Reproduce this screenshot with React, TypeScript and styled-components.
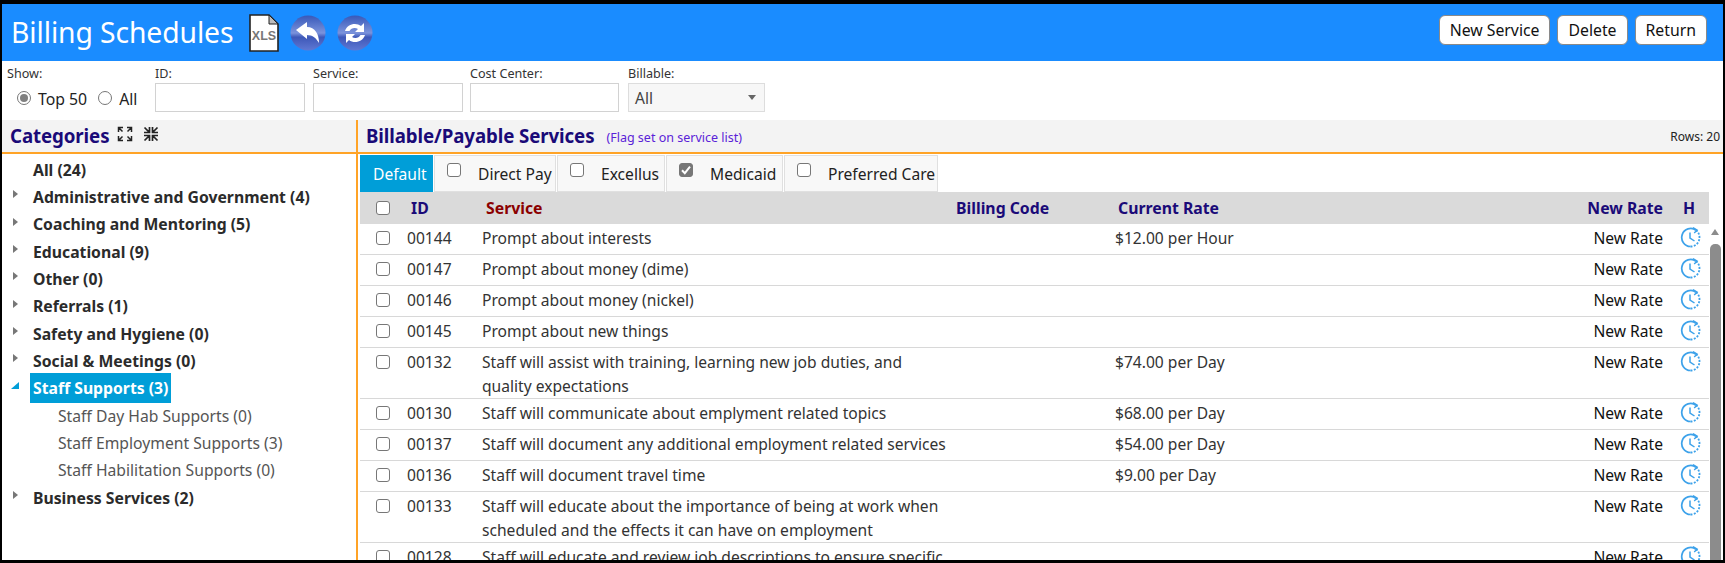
import React from "react";
import styled, { createGlobalStyle } from "styled-components";

const Global = createGlobalStyle`
  html, body { margin: 0; padding: 0; background: #000; overflow: hidden; }
  * { box-sizing: border-box; }
  body { font-family: "Noto Sans", "Open Sans", Arial, sans-serif; }
`;

const Frame = styled.div`
  width: 1725px; height: 563px; background: #fff; overflow: hidden;
  border-style: solid; border-color: #000; border-width: 4px 2px 3px 2px;
  display: flex; flex-direction: column;
`;
const Header = styled.header`
  height: 57px; flex: none; background: #1a8cff; display: flex; align-items: center; padding: 0 16px 0 9px;
`;
const Title = styled.h1`
  margin: 0 16px 0 0; font-size: 28.3px; font-weight: 400; color: #fff; letter-spacing: -0.1px; line-height: 1;
`;
const IconRow = styled.div`display: flex; align-items: center; gap: 11px;`;
const HeadButtons = styled.div`margin-left: auto; display: flex; gap: 7px; margin-top: -6px;`;
const HeadButton = styled.button`
  height: 30px; padding: 0 10px; background: #fff; color: #111; border: 1px solid #8a8a8a; border-radius: 6px;
  font: 400 15.8px "Noto Sans", sans-serif;
`;
const Filters = styled.div`
  height: 59px; flex: none; display: flex; padding: 5px 0 0 5px;
`;
const Field = styled.div<{ $w: number; $gap?: number }>`
  width: ${p => p.$w}px; margin-right: ${p => p.$gap ?? 8}px; display: flex; flex-direction: column;
`;
const FieldLabel = styled.label`
  font-size: 12.6px; line-height: 16px; color: #333; height: 17px; display: block;
`;
const TextBox = styled.input`
  width: 100%; height: 29px; border: 1px solid #d2d2d2; background: #fff; outline: none;
`;
const SelectBox = styled.div`
  height: 29px; border: 1px solid #ddd; background: #f7f7f7; display: flex; align-items: center;
  justify-content: space-between; padding: 0 8px 0 6px; font-size: 15.6px; color: #444;
`;
const Caret = styled.span`
  width: 0; height: 0; border-left: 4.5px solid transparent; border-right: 4.5px solid transparent; border-top: 5px solid #666;
`;
const ShowRow = styled.div`display: flex; align-items: center; height: 29px; padding: 3px 0 0 10px; font-size: 15.8px; color: #222;`;
const Radio = styled.span<{ $on?: boolean }>`
  width: 14px; height: 14px; border-radius: 50%; border: 1px solid #777; background: #fff; display: inline-flex;
  align-items: center; justify-content: center; margin-right: 7px; margin-top: -3px;
  &::after { content: ""; width: 8px; height: 8px; border-radius: 50%; background: ${p => (p.$on ? "#808080" : "transparent")}; }
`;
const RadioText = styled.span`margin-right: 11px;`;
const Panes = styled.div`flex: 1; min-height: 0; display: flex;`;
const LeftPane = styled.aside`width: 354px; flex: none; display: flex; flex-direction: column;`;
const RightPane = styled.section`flex: 1; min-width: 0; display: flex; flex-direction: column; border-left: 2px solid #ffa326;`;
const SectionHead = styled.div`
  height: 34px; flex: none; background: #f3f3f3; border-bottom: 2px solid #ffa326; display: flex; align-items: center;
  padding: 0 3px 0 8px;
`;
const SectionTitle = styled.h2`
  margin: 0; font-size: 18.7px; font-weight: 700; color: #1a0a78; line-height: 1; letter-spacing: -0.1px;
`;
const Note = styled.span`font-size: 12.5px; color: #5a22d8; margin: 3px 0 0 12px;`;
const RowsCount = styled.span`margin-left: auto; font-size: 12px; color: #222;`;
const ExpandIcons = styled.span`display: inline-flex; gap: 10px; margin: -4px 0 0 8px;`;
const Tree = styled.ul`list-style: none; margin: 0; padding: 2px 0 0 0;`;
const TreeItem = styled.li<{ $sub?: boolean }>`
  height: 27.35px; display: flex; align-items: center; position: relative; padding-left: ${p => (p.$sub ? 56 : 28)}px;
`;
const Arrow = styled.span<{ $open?: boolean }>`
  position: absolute; left: ${p => (p.$open ? 9 : 11)}px; top: 7px; width: 0; height: 0;
  ${p => p.$open
    ? "border-bottom: 7px solid #009ed8; border-left: 8px solid transparent;"
    : "border-left: 5px solid #777; border-top: 4.5px solid transparent; border-bottom: 4.5px solid transparent;"}
`;
const CatLabel = styled.span<{ $sel?: boolean }>`
  font-size: 15.75px; font-weight: 700; color: ${p => (p.$sel ? "#fff" : "#2b2b2b")}; background: ${p => (p.$sel ? "#009ed8" : "transparent")};
  line-height: 30px; padding: 0 3px; white-space: nowrap; position: relative;
`;
const SubLabel = styled.span`font-size: 15.7px; color: #555; white-space: nowrap;`;
const Tabs = styled.div`height: 38px; flex: none; display: flex; padding: 1px 0 0 2px;`;
const Tab = styled.div<{ $active?: boolean; $w: number }>`
  width: ${p => p.$w}px; margin-right: 1px; height: 37px; display: flex; align-items: center; font-size: 15.6px; white-space: nowrap;
  padding-left: 12px; color: ${p => (p.$active ? "#fff" : "#222")};
  background: ${p => (p.$active ? "#009ed8" : "#f8f8f8")}; border: 1px solid ${p => (p.$active ? "#009ed8" : "#e0e0e0")};
`;
const Check = styled.span<{ $on?: boolean }>`
  display: block; width: 14px; height: 14px; flex: none; border: 1.5px solid #777; border-radius: 3px; background: ${p => (p.$on ? "#777" : "#fff")};
`;
const TabCheck = styled(Check)`margin: -8px 17px 0 0; display: inline-flex; align-items: center; justify-content: center;`;
const TableArea = styled.div`flex: 1; min-height: 0; display: flex;`;
const Table = styled.div`flex: 1; min-width: 0; overflow: hidden; margin-left: 2px;`;
const cols = "42px 76px 474px 160px 1fr 80px 46px";
const HeadRow = styled.div`
  display: grid; grid-template-columns: ${cols}; height: 32px; background: #dadada; align-items: center;
  font-size: 15.8px; font-weight: 700; color: #1a0a78;
`;
const HeadCell = styled.div<{ $color?: string; $right?: boolean; $pad?: number }>`
  color: ${p => p.$color ?? "#1a0a78"}; text-align: ${p => (p.$right ? "right" : "left")}; padding-left: ${p => p.$pad ?? 0}px; white-space: nowrap;
`;
const Row = styled.div`
  display: grid; grid-template-columns: ${cols}; min-height: 31px; border-bottom: 1px solid #d8d8d8; padding-top: 2px;
  font-size: 15.6px; line-height: 24px; color: #333;
`;
const Cell = styled.div<{ $pad?: number }>`padding-left: ${p => p.$pad ?? 0}px;`;
const HeadCheck = styled.div`padding-left: 16px;`;
const CheckCell = styled.div`padding: 5px 0 0 16px;`;
const RateCell = styled.div`color: #111; white-space: nowrap; text-align: right;`;
const HistoryCell = styled.div`padding-left: 17px; svg { display: block; }`;
const Scrollbar = styled.div`width: 14px; flex: none; display: flex; flex-direction: column; align-items: center; padding: 37px 2px 0 0;`;
const ScrollUp = styled.span`width: 0; height: 0; border-left: 4.5px solid transparent; border-right: 4.5px solid transparent; border-bottom: 6px solid #8c8c8c;`;
const Thumb = styled.div`flex: 1; width: 11px; margin-top: 9px; background: #8c8c8c; border-radius: 5px 5px 0 0;`;

const XlsIcon = () => (
  <svg width="30" height="38" viewBox="0 0 30 38">
    <path d="M1 1h19l9 9v27H1z" fill="#fff" stroke="#222" strokeWidth="1.6" />
    <path d="M20 1v9h9z" fill="#bdbdbd" stroke="#222" strokeWidth="1" />
    <text x="15" y="26" textAnchor="middle" fontFamily="Liberation Sans, sans-serif" fontWeight="700" fontSize="12.5" fill="#777">XLS</text>
  </svg>
);
const Glossy = ({ id, children }: { id: string; children: React.ReactNode }) => (
  <svg width="36" height="36" viewBox="0 0 36 36">
    <defs>
      <linearGradient id={id} x1="0" y1="0" x2="0" y2="1">
        <stop offset="0" stopColor="#3858b8" />
        <stop offset="0.5" stopColor="#7b93dc" />
        <stop offset="0.62" stopColor="#3e58b8" />
        <stop offset="1" stopColor="#5f78d4" />
      </linearGradient>
    </defs>
    <circle cx="18" cy="18" r="17.5" fill={`url(#${id})`} />
    {children}
  </svg>
);
const BackIcon = () => (
  <Glossy id="gb">
    <path d="M6 15 L17 7 V12 C25 12 29 19 29 28 C26 23 23 20 17 20 V24 Z" fill="#fff" />
  </Glossy>
);
const RefreshIcon = () => (
  <Glossy id="gr">
    <path d="M8 16 C10 9 19 7 24 11 L27 8 V17 H18 L21 14 C18 12 14 13 12.5 16 Z M28 20 C26 27 17 29 12 25 L9 28 V19 H18 L15 22 C18 24 22 23 23.5 20 Z" fill="#fff" />
  </Glossy>
);
const ExpandIcon = () => (
  <svg width="16" height="16" viewBox="0 0 16 16" stroke="#222" strokeWidth="1.5" fill="none">
    <path d="M1.5 6V1.5H6M1.5 1.5l4 4M10 1.5h4.5V6M14.5 1.5l-4 4M1.5 10v4.5H6M1.5 14.5l4-4M14.5 10v4.5H10M14.5 14.5l-4-4" />
  </svg>
);
const CollapseIcon = () => (
  <svg width="16" height="16" viewBox="0 0 16 16" stroke="#222" strokeWidth="1.7" fill="none">
    <path d="M6.5 1v5.5H1M1.5 1.5l5 5M9.5 1v5.5H15M14.5 1.5l-5 5M6.5 15V9.5H1M1.5 14.5l5-5M9.5 15V9.5H15M14.5 14.5l-5-5" />
  </svg>
);
const ClockIcon = () => (
  <svg width="21" height="22" viewBox="0 0 21 22" fill="none" stroke="#3da2ea">
    <path d="M16 4.2A9 9 0 1 0 10.5 20.5" strokeWidth="1.7" />
    <path d="M10.5 20.5A9 9 0 0 0 19.5 11.5A9 9 0 0 0 16 4.2" strokeWidth="1.8" strokeDasharray="2 1.4" />
    <path d="M10 6.5V12l4.5 3" strokeWidth="1.5" />
    <path d="M13 1.5l4.2 2.6-3 3" strokeWidth="1.4" />
  </svg>
);
const Tick = () => (
  <svg width="10" height="10" viewBox="0 0 10 10"><path d="M1 5.2l2.8 3L9 1.6" fill="none" stroke="#fff" strokeWidth="2" /></svg>
);

const categories: { t: string; arrow?: boolean; open?: boolean; sel?: boolean; sub?: boolean }[] = [
  { t: "All (24)" },
  { t: "Administrative and Government (4)", arrow: true },
  { t: "Coaching and Mentoring (5)", arrow: true },
  { t: "Educational (9)", arrow: true },
  { t: "Other (0)", arrow: true },
  { t: "Referrals (1)", arrow: true },
  { t: "Safety and Hygiene (0)", arrow: true },
  { t: "Social & Meetings (0)", arrow: true },
  { t: "Staff Supports (3)", arrow: true, open: true, sel: true },
  { t: "Staff Day Hab Supports (0)", sub: true },
  { t: "Staff Employment Supports (3)", sub: true },
  { t: "Staff Habilitation Supports (0)", sub: true },
  { t: "Business Services (2)", arrow: true },
];

const rows: { id: string; s: string; rate?: string }[] = [
  { id: "00144", s: "Prompt about interests", rate: "$12.00 per Hour" },
  { id: "00147", s: "Prompt about money (dime)" },
  { id: "00146", s: "Prompt about money (nickel)" },
  { id: "00145", s: "Prompt about new things" },
  { id: "00132", s: "Staff will assist with training, learning new job duties, and quality expectations", rate: "$74.00 per Day" },
  { id: "00130", s: "Staff will communicate about emplyment related topics", rate: "$68.00 per Day" },
  { id: "00137", s: "Staff will document any additional employment related services", rate: "$54.00 per Day" },
  { id: "00136", s: "Staff will document travel time", rate: "$9.00 per Day" },
  { id: "00133", s: "Staff will educate about the importance of being at work when scheduled and the effects it can have on employment" },
  { id: "00128", s: "Staff will educate and review job descriptions to ensure specific" },
];

const tabs = [
  { t: "Direct Pay", w: 122 },
  { t: "Excellus", w: 108 },
  { t: "Medicaid", w: 117 },
  { t: "Preferred Care", w: 154 },
];

export default function App() {
  return (
    <Frame>
      <Global />
      <Header>
        <Title>Billing Schedules</Title>
        <IconRow>
          <XlsIcon />
          <BackIcon />
          <RefreshIcon />
        </IconRow>
        <HeadButtons>
          <HeadButton>New Service</HeadButton>
          <HeadButton>Delete</HeadButton>
          <HeadButton>Return</HeadButton>
        </HeadButtons>
      </Header>
      <Filters>
        <Field $w={148} $gap={0}>
          <FieldLabel>Show:</FieldLabel>
          <ShowRow>
            <Radio $on /><RadioText>Top 50</RadioText>
            <Radio /><RadioText>All</RadioText>
          </ShowRow>
        </Field>
        <Field $w={150}><FieldLabel>ID:</FieldLabel><TextBox /></Field>
        <Field $w={150} $gap={7}><FieldLabel>Service:</FieldLabel><TextBox /></Field>
        <Field $w={149} $gap={9}><FieldLabel>Cost Center:</FieldLabel><TextBox /></Field>
        <Field $w={137}>
          <FieldLabel>Billable:</FieldLabel>
          <SelectBox>All<Caret /></SelectBox>
        </Field>
      </Filters>
      <Panes>
        <LeftPane>
          <SectionHead>
            <SectionTitle>Categories</SectionTitle>
            <ExpandIcons><ExpandIcon /><CollapseIcon /></ExpandIcons>
          </SectionHead>
          <Tree>
            {categories.map(c => (
              <TreeItem key={c.t} $sub={c.sub}>
                {c.arrow && <Arrow $open={c.open} />}
                {c.sub ? <SubLabel>{c.t}</SubLabel> : <CatLabel $sel={c.sel}>{c.t}</CatLabel>}
              </TreeItem>
            ))}
          </Tree>
        </LeftPane>
        <RightPane>
          <SectionHead>
            <SectionTitle>Billable/Payable Services</SectionTitle>
            <Note>(Flag set on service list)</Note>
            <RowsCount>Rows: 20</RowsCount>
          </SectionHead>
          <Tabs>
            <Tab $active $w={73}>Default</Tab>
            {tabs.map(t => (
              <Tab key={t.t} $w={t.w}>
                <TabCheck $on={t.t === "Medicaid"}>{t.t === "Medicaid" && <Tick />}</TabCheck>
                {t.t}
              </Tab>
            ))}
          </Tabs>
          <TableArea>
            <Table>
              <HeadRow>
                <HeadCheck><Check /></HeadCheck>
                <HeadCell $pad={9}>ID</HeadCell>
                <HeadCell $color="#8b0000" $pad={8}>Service</HeadCell>
                <HeadCell $pad={4}>Billing Code</HeadCell>
                <HeadCell $pad={6}>Current Rate</HeadCell>
                <HeadCell $right>New Rate</HeadCell>
                <HeadCell $pad={20}>H</HeadCell>
              </HeadRow>
              {rows.map(r => (
                <Row key={r.id}>
                  <CheckCell><Check /></CheckCell>
                  <Cell $pad={5}>{r.id}</Cell>
                  <Cell $pad={4}>{r.s}</Cell>
                  <Cell />
                  <Cell $pad={3}>{r.rate}</Cell>
                  <RateCell>New Rate</RateCell>
                  <HistoryCell><ClockIcon /></HistoryCell>
                </Row>
              ))}
            </Table>
            <Scrollbar>
              <ScrollUp />
              <Thumb />
            </Scrollbar>
          </TableArea>
        </RightPane>
      </Panes>
    </Frame>
  );
}
